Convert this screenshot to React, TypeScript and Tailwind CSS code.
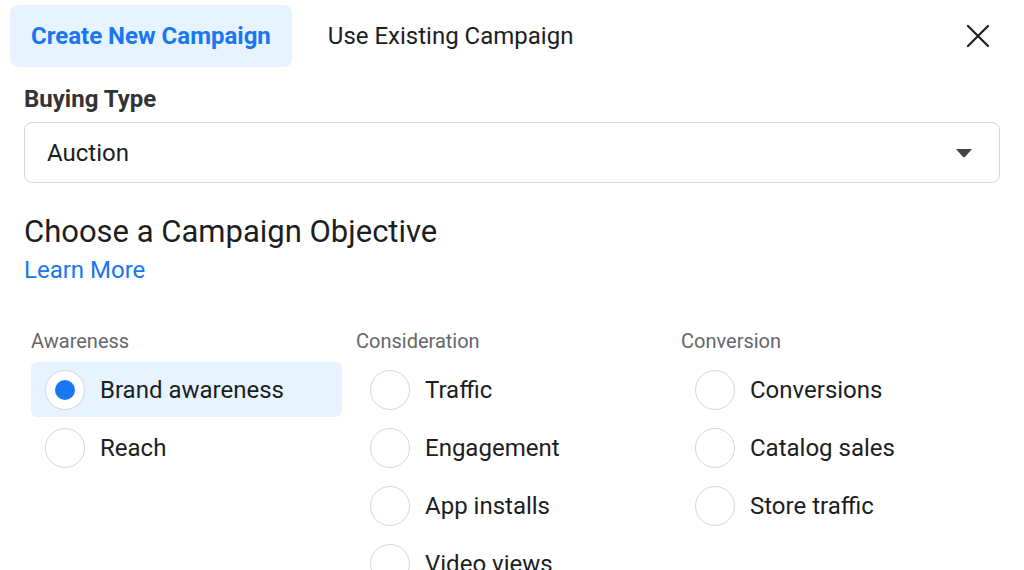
const columns = [
  { title: 'Awareness', items: ['Brand awareness', 'Reach'] },
  { title: 'Consideration', items: ['Traffic', 'Engagement', 'App installs', 'Video views'] },
  { title: 'Conversion', items: ['Conversions', 'Catalog sales', 'Store traffic'] },
];

const selected = 'Brand awareness';

function Radio({ checked }: { checked: boolean }) {
  return (
    <span className="flex h-10 w-10 shrink-0 items-center justify-center rounded-full border-[1.5px] border-[#d5d7da] bg-white">
      {checked && <span className="h-5 w-5 rounded-full bg-[#1877f2]" />}
    </span>
  );
}

export default function App() {
  return (
    <div className="h-[570px] w-[1024px] overflow-hidden bg-white font-['Roboto',sans-serif] text-[#1c1e21]">
      <div className="flex items-center pl-[10px] pr-[30px] pt-[5px]">
        <button className="h-[62px] rounded-lg bg-[#e7f3ff] px-[21px] text-[24px] font-bold text-[#1877f2]">
          Create New Campaign
        </button>
        <button className="ml-[15px] h-[62px] px-[21px] text-[24px] text-[#1c1e21]">Use Existing Campaign</button>
        <button className="ml-auto flex h-8 w-8 items-center justify-center text-[#1c1e21]">
          <svg width="24" height="24" viewBox="0 0 24 24" fill="none" stroke="currentColor" strokeWidth="2.2" strokeLinecap="round">
            <path d="M2 2L22 22M22 2L2 22" />
          </svg>
        </button>
      </div>

      <div className="px-6">
        <h3 className="mt-[18px] text-[24px] font-bold leading-[28px] text-[#333]">Buying Type</h3>
        <div className="mt-[9px] flex h-[61px] items-center justify-between rounded-lg border-[1.5px] border-[#d5d7da] pl-[22px] pr-[26px]">
          <span className="text-[24px]">Auction</span>
          <svg width="18" height="10" viewBox="0 0 18 10" className="text-[#444]">
            <path d="M1 1H17L10.4 8.6Q9 10 7.6 8.6Z" fill="currentColor" />
          </svg>
        </div>

        <h2 className="mt-[31px] text-[31px] leading-[36px]">Choose a Campaign Objective</h2>
        <a className="mt-[6px] block text-[24px] leading-[28px] text-[#1877f2]">Learn More</a>

        <div className="mt-[45px] grid grid-cols-[325px_325px_325px] pl-[7px]">
          {columns.map((col) => (
            <div key={col.title}>
              <p className="text-[20px] leading-[24px] text-[#65676b]">{col.title}</p>
              <div className="mt-[9px] flex flex-col gap-[3px]">
                {col.items.map((item) => {
                  const checked = item === selected;
                  return (
                    <div
                      key={item}
                      className={`flex h-[55px] w-[311px] items-center gap-[15px] rounded-md pl-[14px] ${
                        checked ? 'bg-[#e7f3ff]' : ''
                      }`}
                    >
                      <Radio checked={checked} />
                      <span className="text-[24px]">{item}</span>
                    </div>
                  );
                })}
              </div>
            </div>
          ))}
        </div>
      </div>
    </div>
  );
}
